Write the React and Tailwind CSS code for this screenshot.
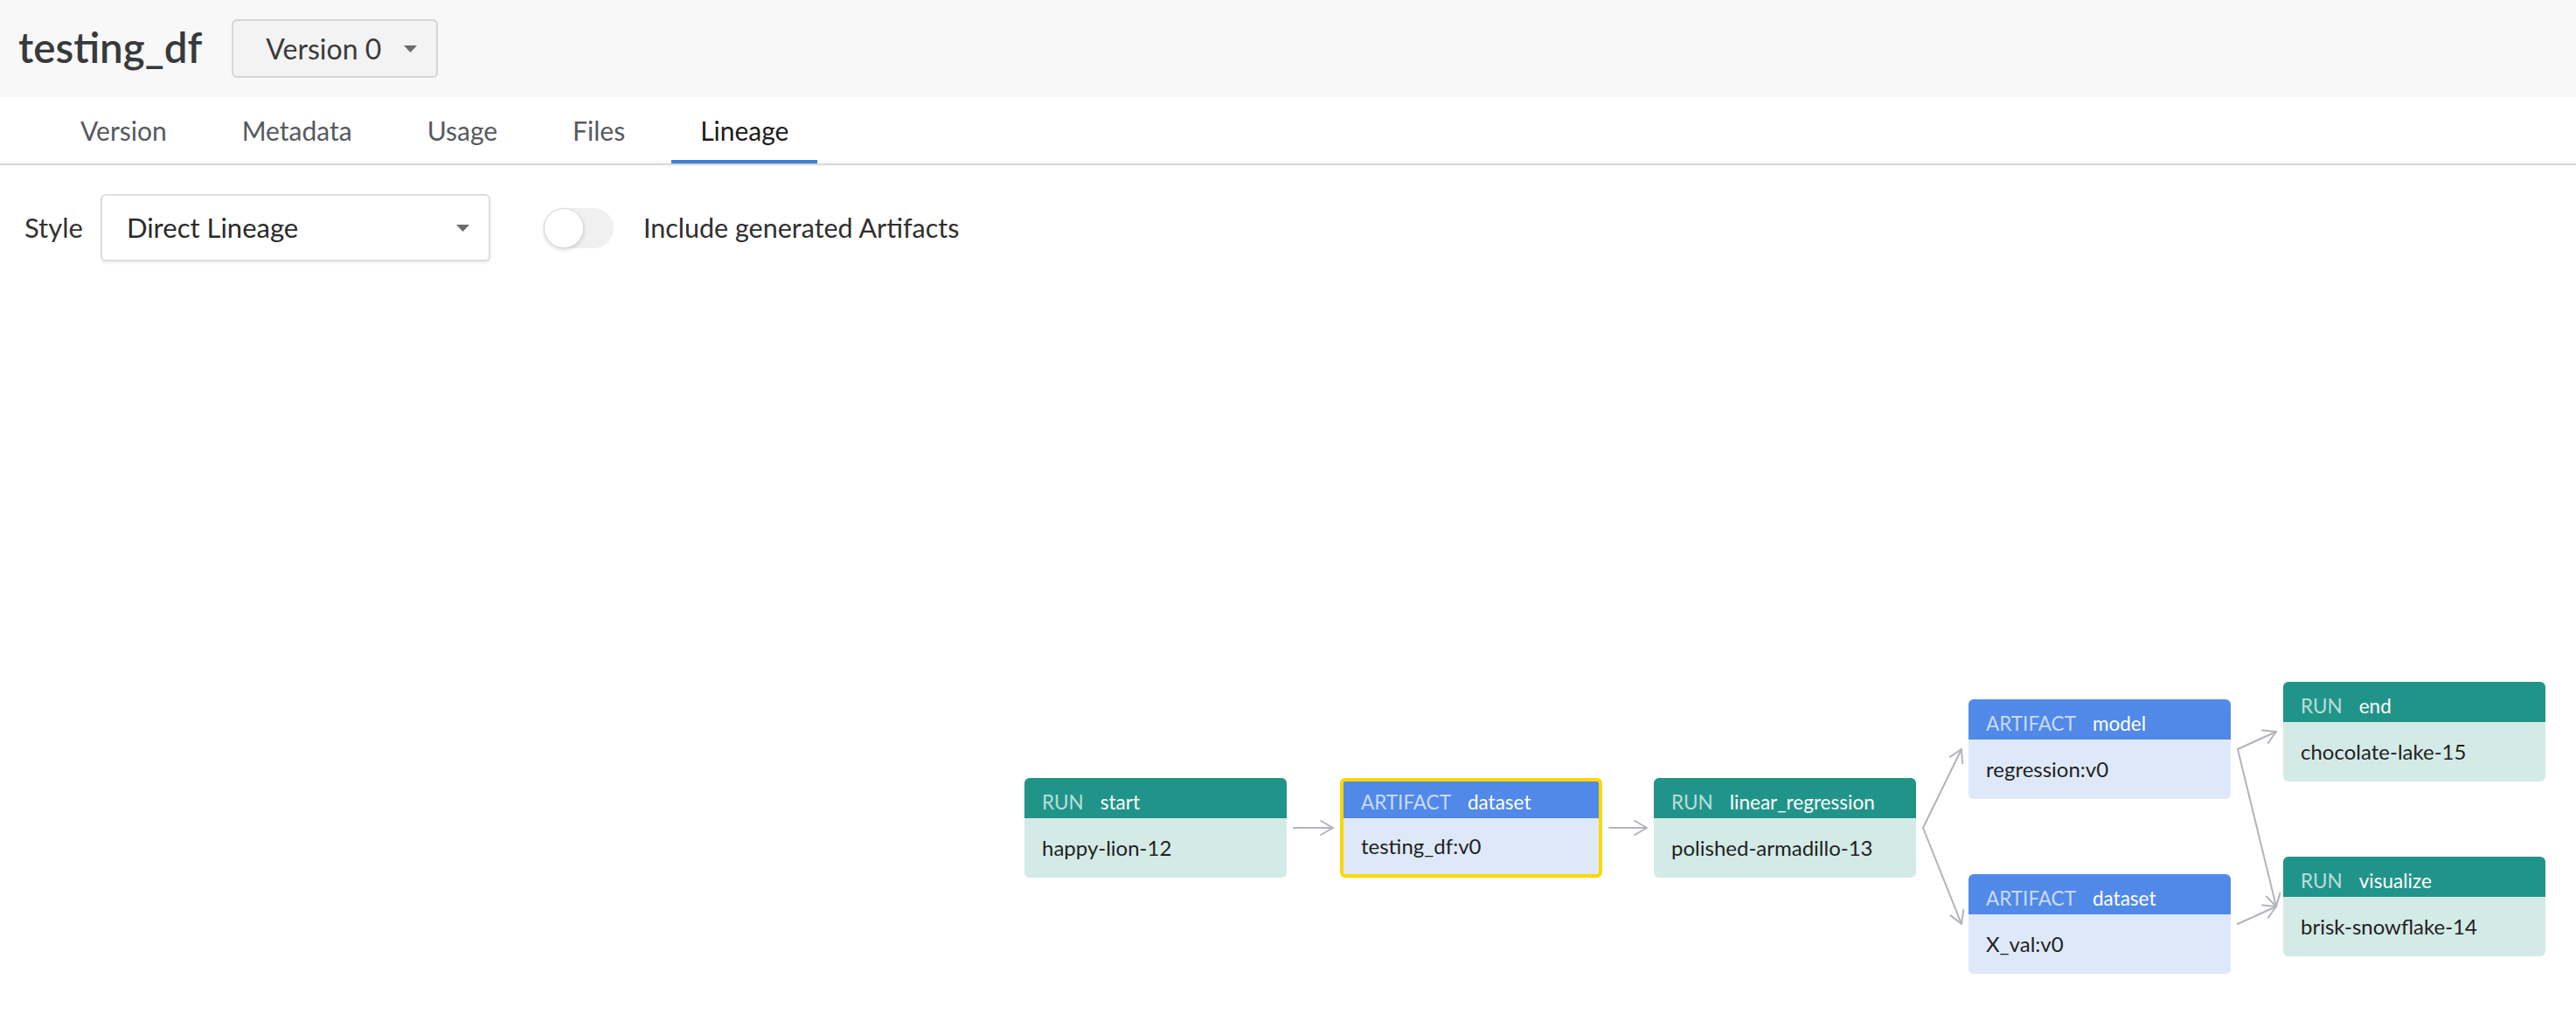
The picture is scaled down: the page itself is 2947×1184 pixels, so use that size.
import React from "react";

const W = 300;
const H = 114;

const NODES = [
  { id: "start", kind: "RUN", type: "start", name: "happy-lion-12", x: 1172, y: 570 },
  { id: "ds", kind: "ARTIFACT", type: "dataset", name: "testing_df:v0", x: 1533, y: 570, selected: true },
  { id: "lr", kind: "RUN", type: "linear_regression", name: "polished-armadillo-13", x: 1892, y: 570 },
  { id: "model", kind: "ARTIFACT", type: "model", name: "regression:v0", x: 2252, y: 480 },
  { id: "xval", kind: "ARTIFACT", type: "dataset", name: "X_val:v0", x: 2252, y: 680 },
  { id: "end", kind: "RUN", type: "end", name: "chocolate-lake-15", x: 2612, y: 460 },
  { id: "vis", kind: "RUN", type: "visualize", name: "brisk-snowflake-14", x: 2612, y: 660 },
];

const EDGES = [
  ["start", "ds"],
  ["ds", "lr"],
  ["lr", "model"],
  ["lr", "xval"],
  ["model", "end"],
  ["model", "vis"],
  ["xval", "vis"],
];

function Caret() {
  return (
    <svg width="15" height="8" viewBox="0 0 15 8" className="shrink-0">
      <path d="M0 0 L15 0 L7.5 8 Z" fill="#6b6b6b" />
    </svg>
  );
}

function Edges() {
  const byId = Object.fromEntries(NODES.map((n) => [n.id, n]));
  return (
    <svg className="absolute inset-0 w-full h-full" fill="none">
      {EDGES.map(([a, b]) => {
        const s = byId[a];
        const t = byId[b];
        const x1 = s.x + W + 8;
        const y1 = s.y + H / 2;
        const x2 = t.x - 8;
        const y2 = t.y + H / 2;
        const ang = Math.atan2(y2 - y1, x2 - x1);
        const arm = 16;
        const p1 = [x2 - arm * Math.cos(ang - Math.PI / 6), y2 - arm * Math.sin(ang - Math.PI / 6)];
        const p2 = [x2 - arm * Math.cos(ang + Math.PI / 6), y2 - arm * Math.sin(ang + Math.PI / 6)];
        return (
          <g key={a + b} stroke="#b3b3bb" strokeWidth="2" strokeLinecap="round" strokeLinejoin="round">
            <line x1={x1} y1={y1} x2={x2} y2={y2} />
            <polyline points={`${p1[0]},${p1[1]} ${x2},${y2} ${p2[0]},${p2[1]}`} />
          </g>
        );
      })}
    </svg>
  );
}

function Node({ n }) {
  const run = n.kind === "RUN";
  return (
    <div
      className={
        "absolute w-[300px] h-[114px] rounded-[6px] overflow-hidden flex flex-col box-border " +
        (n.selected ? "border-4 border-[#ffd600] " : "") +
        (run ? "bg-[#d4eae6]" : "bg-[#dde9f9]")
      }
      style={{ left: n.x, top: n.y }}
    >
      <div
        className={
          "flex items-center gap-[19px] px-[20px] text-[22.5px] " +
          (n.selected ? "h-[42px] pt-[6px] " : "h-[46px] pt-[9px] ") +
          (run ? "bg-[#21948a]" : "bg-[#5189e9]")
        }
      >
        <span className="text-white/70">{n.kind}</span>
        <span className="text-white">{n.type}</span>
      </div>
      <div className="flex-1 flex items-center px-[20px] text-[24px] text-[#1f1f1f]">{n.name}</div>
    </div>
  );
}

export default function App() {
  return (
    <div className="w-full h-screen overflow-hidden bg-white font-['Lato',sans-serif] flex flex-col">
      <div className="h-[111px] shrink-0 bg-[#f8f8f8] flex items-center pl-[21px] gap-[34px]">
        <h1 className="text-[47.5px] font-semibold text-[#363a3d] leading-none pb-[4px]">testing_df</h1>
        <button className="w-[236px] h-[67px] rounded-[6px] border-2 border-[#d5d5d5] bg-[#f3f3f3] flex items-center pl-[37px] gap-[26px] text-[32px] text-[#3a3a3a]">
          <span>Version 0</span>
          <Caret />
        </button>
      </div>

      <div className="h-[78px] shrink-0 border-b-2 border-[#d6d6d6] flex items-stretch pl-[59px] gap-[20px] text-[30px]">
        {["Version", "Metadata", "Usage", "Files", "Lineage"].map((t) => (
          <div
            key={t}
            className={
              "px-[33px] flex items-center pt-[4px] border-b-4 " +
              (t === "Lineage" ? "border-[#3d7fd3] text-[#1b1b1b]" : "border-transparent text-[#555a5e]")
            }
          >
            {t}
          </div>
        ))}
      </div>

      <div className="h-[131px] shrink-0 flex items-start pt-[33px] pl-[28px]">
        <div className="h-[77px] flex items-center">
          <span className="text-[31px] text-[#333] mr-[20px]">Style</span>
          <div className="w-[446px] h-[77px] rounded-[6px] border-2 border-[#dedede] bg-white shadow-[0_2px_3px_rgba(0,0,0,0.08)] flex items-center justify-between pl-[28px] pr-[22px] text-[31px] text-[#2a2a2a]">
            <span>Direct Lineage</span>
            <Caret />
          </div>
          <div className="ml-[61px] w-[80px] h-[46px] rounded-full bg-[#f0f0f0] relative">
            <div className="absolute left-0 top-0 w-[46px] h-[46px] rounded-full bg-white border border-[#d9d9d9] shadow-[0_2px_4px_rgba(0,0,0,0.15)]" />
          </div>
          <span className="ml-[34px] text-[30.5px] text-[#2f2f2f]">Include generated Artifacts</span>
        </div>
      </div>

      <div className="relative flex-1">
        <Edges />
        {NODES.map((n) => (
          <Node key={n.id} n={n} />
        ))}
      </div>
    </div>
  );
}
